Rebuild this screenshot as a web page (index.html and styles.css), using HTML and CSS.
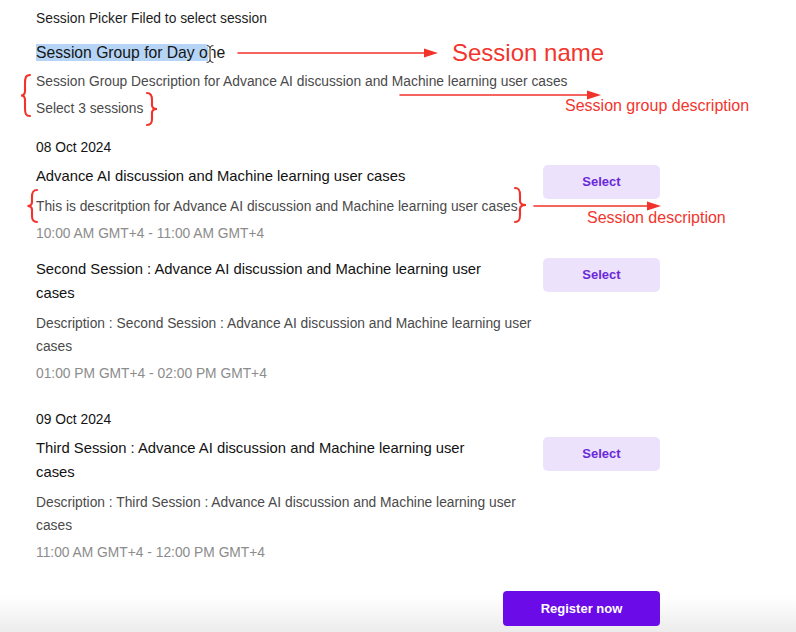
FILE: index.html
```html
<!DOCTYPE html>
<html lang="en">
<head>
<meta charset="utf-8">
<title>Session Picker</title>
<link rel="stylesheet" href="styles.css">
</head>
<body>
<main class="picker">
  <p class="picker-label">Session Picker Filed to select session</p>
  <h1 class="group-name"><span class="selection">Session Group for Day o</span>ne</h1>
  <div class="group-desc">
    <p>Session Group Description for Advance AI discussion and Machine learning user cases</p>
    <p>Select 3 sessions</p>
  </div>

  <section class="day">
    <h2 class="day-date">08 Oct 2024</h2>
    <div class="session">
      <div class="session-info">
        <h3 class="session-title">Advance AI discussion and Machine learning user cases</h3>
        <p class="session-desc">This is descritption for Advance AI discussion and Machine learning user cases.</p>
        <p class="session-time">10:00 AM GMT+4 - 11:00 AM GMT+4</p>
      </div>
      <button class="select-btn" type="button">Select</button>
    </div>
    <div class="session">
      <div class="session-info">
        <h3 class="session-title">Second Session : Advance AI discussion and Machine learning user cases</h3>
        <p class="session-desc">Description : Second Session : Advance AI discussion and Machine learning user cases</p>
        <p class="session-time">01:00 PM GMT+4 - 02:00 PM GMT+4</p>
      </div>
      <button class="select-btn" type="button">Select</button>
    </div>
  </section>

  <section class="day">
    <h2 class="day-date">09 Oct 2024</h2>
    <div class="session">
      <div class="session-info">
        <h3 class="session-title">Third Session : Advance AI discussion and Machine learning user cases</h3>
        <p class="session-desc">Description : Third Session : Advance AI discussion and Machine learning user cases</p>
        <p class="session-time">11:00 AM GMT+4 - 12:00 PM GMT+4</p>
      </div>
      <button class="select-btn" type="button">Select</button>
    </div>
  </section>

  <div class="actions">
    <button class="register-btn" type="button">Register now</button>
  </div>
</main>

<div class="annotations" aria-hidden="true">
  <svg class="annotation-lines" width="796" height="632" viewBox="0 0 796 632">
    <g fill="none" stroke="#f2332b" stroke-width="1.6" stroke-linecap="round">
      <line x1="238" y1="53" x2="426" y2="53"/>
      <line x1="400" y1="95" x2="589" y2="95"/>
      <line x1="534" y1="206" x2="649" y2="206"/>
    </g>
    <g fill="none" stroke="#f2332b" stroke-width="2.1" stroke-linecap="round">
      <path d="M30,75 C25.5,75 25,78 25,84 L25,91 C25,94 23.5,95.5 21,95.5 C23.5,95.5 25,97 25,100 L25,108 C25,114 26,116 30,116"/>
      <path d="M147,93 C151,93 152,96 152,100 L152,105 C152,108 154,109 157,109 C154,109 152,110 152,113 L152,119 C152,123 151,125 147,125"/>
      <path d="M37,190 C33,190 32,192 32,197 L32,202 C32,204.5 30.5,206 27.5,206 C30.5,206 32,207.5 32,210 L32,216 C32,220 33,222 37,222"/>
      <path d="M515,188 C519,188 520,190 520,195 L520,201 C520,203.5 522,205 526,205 C522,205 520,206.5 520,209 L520,215 C520,220 519,222 515,222"/>
    </g>
    <g fill="#f2332b">
      <polygon points="424,48.5 438,53 424,57.5"/>
      <polygon points="587,90.5 601,95 587,99.5"/>
      <polygon points="647,201.5 661,206 647,210.5"/>
    </g>
    <g fill="none" stroke-linecap="round">
      <path d="M207,45.5 Q210,45.5 210,48 L210,60 Q210,62.5 207,62.5 M213,45.5 Q210,45.5 210,48 M213,62.5 Q210,62.5 210,60" stroke="#ffffff" stroke-width="2.6"/>
      <path d="M207,45.5 Q210,45.5 210,48 L210,60 Q210,62.5 207,62.5 M213,45.5 Q210,45.5 210,48 M213,62.5 Q210,62.5 210,60" stroke="#2b2b2b" stroke-width="1"/>
    </g>
  </svg>
  <span class="note note-name">Session name</span>
  <span class="note note-group">Session group description</span>
  <span class="note note-session">Session description</span>
</div>
</body>
</html>
```

FILE: styles.css
```css
html {
  min-height: 100%;
  background: linear-gradient(to bottom, #ffffff 0, #ffffff 596px, #ececec 632px) no-repeat;
  background-size: 100% 632px;
}

body {
  margin: 0;
  font-family: "Liberation Sans", Arial, Helvetica, sans-serif;
  color: #111111;
  position: relative;
  min-height: 632px;
}

p, h1, h2, h3 {
  margin: 0;
  font-weight: normal;
}

.picker {
  width: 624px;
  padding: 9px 0 0 36px;
}

.picker-label {
  font-size: 13.8px;
  line-height: 20px;
  color: #1c1c1c;
}

.group-name {
  margin-top: 14px;
  font-size: 15.7px;
  line-height: 20px;
  color: #141414;
}

.selection {
  background: #b5d4f6;
}

.group-desc {
  margin-top: 4.5px;
  font-size: 13.8px;
  line-height: 27px;
  color: #4a4a4a;
}

.day {
  margin-top: 16.5px;
}

.day + .day {
  margin-top: 25px;
}

.day-date {
  font-size: 13.8px;
  line-height: 20px;
  color: #141414;
  margin-bottom: 6px;
}

.session {
  display: grid;
  grid-template-columns: 1fr 117px;
  column-gap: 8px;
  align-items: start;
}

.session + .session {
  margin-top: 12px;
}

.session-title {
  max-width: 460px;
  font-size: 14.8px;
  line-height: 24px;
  color: #121212;
}

.session-desc {
  margin-top: 7px;
  font-size: 13.8px;
  line-height: 23px;
  color: #4a4a4a;
}

.session-time {
  margin-top: 4px;
  font-size: 13.8px;
  line-height: 23px;
  color: #8c8c8c;
}

.select-btn {
  height: 34px;
  border: 0;
  border-radius: 5px;
  background: #ede2fc;
  color: #6a28d8;
  font-family: inherit;
  font-size: 13px;
  font-weight: bold;
  margin-top: 0.5px;
}

.actions {
  display: flex;
  justify-content: flex-end;
  margin-top: 27px;
}

.register-btn {
  width: 157px;
  height: 35px;
  border: 0;
  border-radius: 4px;
  background: #6a0be8;
  color: #ffffff;
  font-family: inherit;
  font-size: 13px;
  font-weight: bold;
}

.annotations {
  position: absolute;
  inset: 0;
  pointer-events: none;
}

.annotation-lines {
  position: absolute;
  top: 0;
  left: 0;
}

.note {
  position: absolute;
  color: #f2352d;
  white-space: nowrap;
}

.note-name {
  left: 452px;
  top: 39px;
  font-size: 24px;
  line-height: 28px;
}

.note-group {
  left: 565px;
  top: 96px;
  font-size: 16px;
  line-height: 20px;
}

.note-session {
  left: 587px;
  top: 208px;
  font-size: 16px;
  line-height: 20px;
}
```
